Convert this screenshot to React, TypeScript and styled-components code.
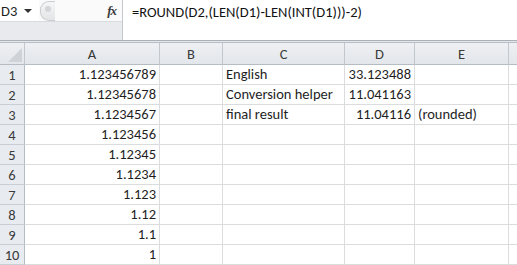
import React from 'react';
import styled, { createGlobalStyle } from 'styled-components';

const GlobalStyle = createGlobalStyle`
  html, body {
    margin: 0;
    padding: 0;
    background: #ffffff;
  }
  body {
    font-family: Calibri, Carlito, 'Liberation Sans', Arial, sans-serif;
    color: #1e1e1e;
    overflow: hidden;
  }
`;

const COLS = [25, 135, 63, 122, 70, 94, 30];
const ROW_H = 20;

const Sheet = styled.div`
  width: 517px;
  height: 265px;
  overflow: hidden;
  background: #fff;
`;

const FormulaBar = styled.div`
  display: flex;
  height: 40px;
  background: #e8eaed;
`;

const LeftTools = styled.div`
  width: 123px;
  display: flex;
  flex-direction: column;
  border-right: 1px solid #c4c8cd;
  box-sizing: border-box;
`;

const ToolRow = styled.div`
  height: 22px;
  display: flex;
  align-items: center;
  background: #fafafa;
  border-bottom: 1px solid #d8dbdf;
  box-sizing: border-box;
`;

const NameBox = styled.div`
  width: 39px;
  height: 100%;
  display: flex;
  align-items: center;
  justify-content: space-between;
  padding: 0 7px 0 1px;
  box-sizing: border-box;
  font-size: 14.5px;
  background: #fff;
`;

const DropArrow = styled.span`
  width: 0;
  height: 0;
  border-left: 4px solid transparent;
  border-right: 4px solid transparent;
  border-top: 4px solid #333;
`;

const Splitter = styled.div`
  width: 14px;
  height: 18px;
  margin-left: 1px;
  border-radius: 9px 0 0 9px;
  border: 1px solid #c9ccd0;
  border-right: none;
  background: linear-gradient(#f6f6f6, #e2e4e6);
  position: relative;
  &::after {
    content: '';
    position: absolute;
    left: 4px;
    top: 4px;
    width: 6px;
    height: 6px;
    border-radius: 50%;
    background: #d3d5d8;
  }
`;

const Fx = styled.span`
  margin-left: auto;
  margin-right: 6px;
  font-family: 'Liberation Serif', 'Times New Roman', serif;
  font-style: italic;
  font-weight: bold;
  font-size: 13px;
  color: #3a3a3a;
  letter-spacing: -1px;
`;

const FormulaInput = styled.div`
  flex: 1;
  background: #fff;
  font-size: 14.5px;
  padding: 3px 0 0 9px;
  color: #111;
`;

const Gap = styled.div`
  height: 1px;
  background: #e4e7ea;
  border-top: 1px solid #a9b0b8;
  border-bottom: 1px solid #b8bec5;
`;

const Grid = styled.div`
  display: grid;
  grid-template-columns: ${COLS.map((c) => `${c}px`).join(' ')};
  grid-template-rows: 22px repeat(10, ${ROW_H}px);
`;

const Header = styled.div`
  background: linear-gradient(#eef0f3, #e3e6ea);
  border-right: 1px solid #c3c8ce;
  border-bottom: 1px solid #b5bcc4;
  display: flex;
  align-items: center;
  justify-content: center;
  font-size: 14.5px;
  color: #3a3a3a;
  position: relative;
  box-sizing: border-box;
`;

const CornerTriangle = styled.span`
  position: absolute;
  right: 2px;
  bottom: 2px;
  width: 0;
  height: 0;
  border-left: 14px solid transparent;
  border-bottom: 14px solid #cfd3d8;
`;

const RowHeader = styled.div`
  background: #e8ebef;
  border-right: 1px solid #b5bcc4;
  border-bottom: 1px solid #c9ced4;
  display: flex;
  align-items: center;
  justify-content: center;
  font-size: 14.5px;
  color: #3a3a3a;
  box-sizing: border-box;
`;

const Cell = styled.div<{ $align?: 'left' | 'right' }>`
  border-right: 1px solid #dadcdd;
  border-bottom: 1px solid #dadcdd;
  box-sizing: border-box;
  font-size: 14.5px;
  line-height: 19px;
  padding: 0 3px;
  text-align: ${(p) => p.$align ?? 'left'};
  white-space: nowrap;
  color: #1e1e1e;
`;

const colA = [
  '1.123456789',
  '1.12345678',
  '1.1234567',
  '1.123456',
  '1.12345',
  '1.1234',
  '1.123',
  '1.12',
  '1.1',
  '1',
];

const colC = ['English', 'Conversion helper', 'final result'];
const colD = ['33.123488', '11.041163', '11.04116'];
const colE = ['', '', '(rounded)'];

const App = () => {
  return (
    <Sheet>
      <GlobalStyle />
      <FormulaBar>
        <LeftTools>
          <ToolRow>
            <NameBox>
              D3
              <DropArrow />
            </NameBox>
            <Splitter />
            <Fx>fx</Fx>
          </ToolRow>
        </LeftTools>
        <FormulaInput>=ROUND(D2,(LEN(D1)-LEN(INT(D1)))-2)</FormulaInput>
      </FormulaBar>
      <Gap />
      <Grid>
        <Header>
          <CornerTriangle />
        </Header>
        {['A', 'B', 'C', 'D', 'E', ''].map((h, i) => (
          <Header key={i}>{h}</Header>
        ))}
        {colA.map((a, r) => (
          <React.Fragment key={r}>
            <RowHeader>{r + 1}</RowHeader>
            <Cell $align="right">{a}</Cell>
            <Cell />
            <Cell>{colC[r] ?? ''}</Cell>
            <Cell $align="right">{colD[r] ?? ''}</Cell>
            <Cell>{colE[r] ?? ''}</Cell>
            <Cell />
          </React.Fragment>
        ))}
      </Grid>
    </Sheet>
  );
};

export default App;
